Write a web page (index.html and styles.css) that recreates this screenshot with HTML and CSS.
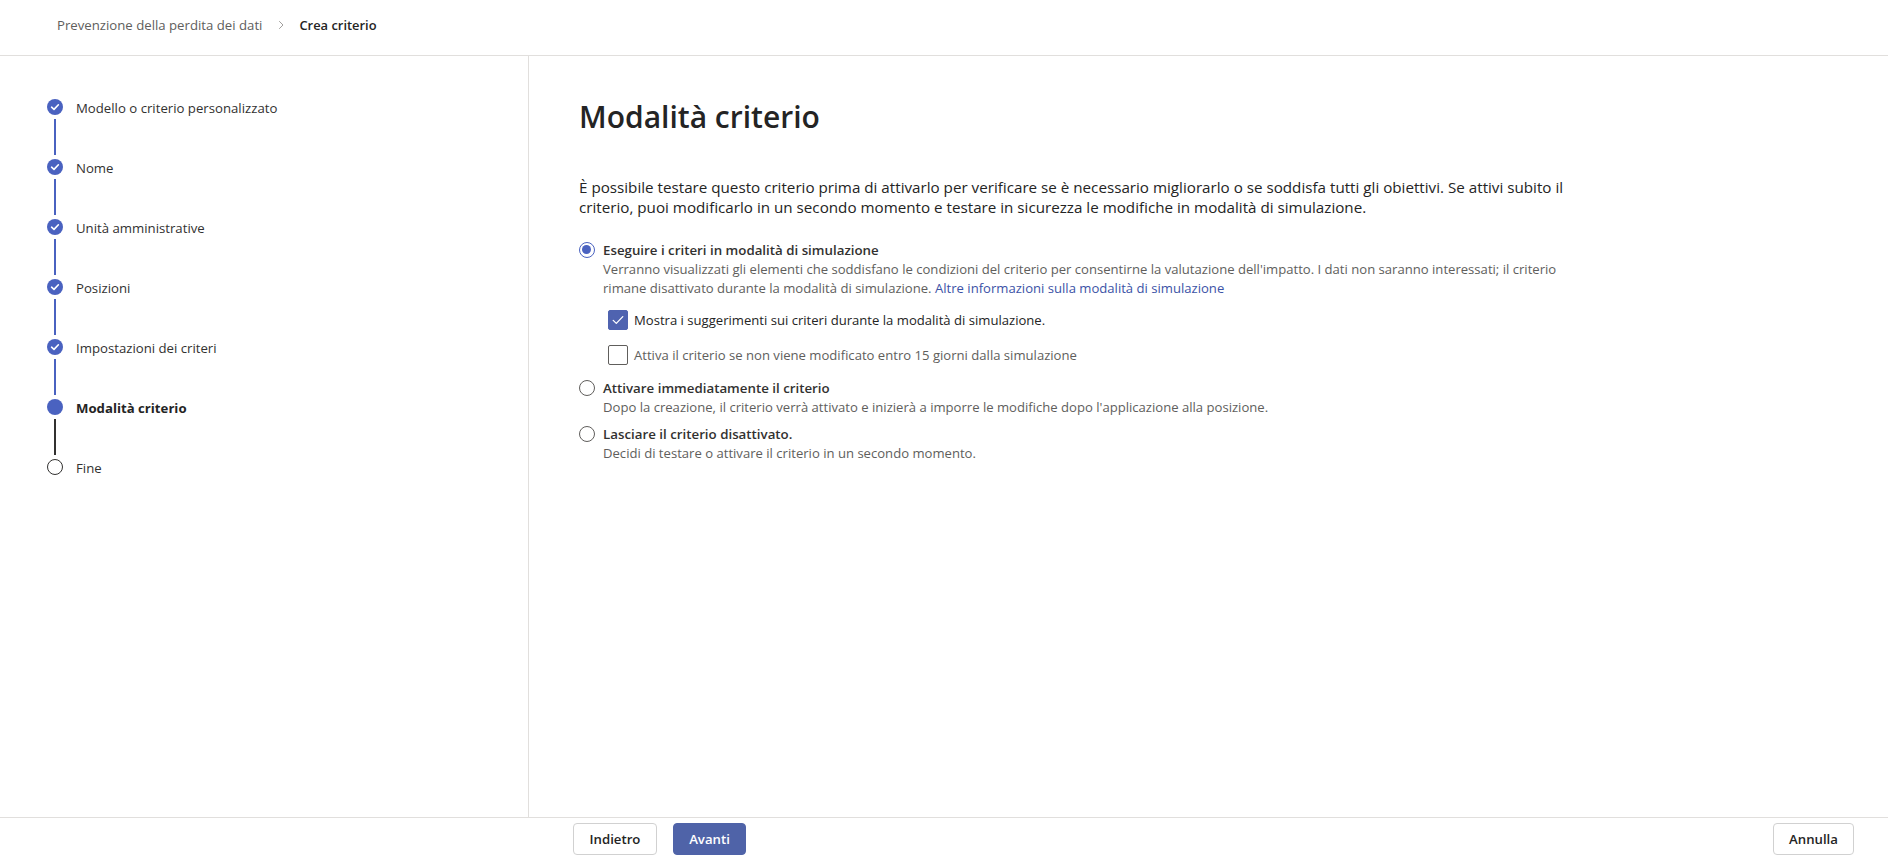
FILE: index.html
```html
<!DOCTYPE html>
<html lang="it">
<head>
<meta charset="utf-8">
<title>Crea criterio</title>
<link rel="stylesheet" href="styles.css">
</head>
<body>
<div class="app">
  <header class="topbar">
    <nav class="crumbs">
      <span class="crumb">Prevenzione della perdita dei dati</span>
      <svg class="crumb-sep" width="12" height="12" viewBox="0 0 12 12"><path d="M4.2 2.2 L8 6 L4.2 9.8" fill="none" stroke="#a19f9d" stroke-width="1"/></svg>
      <span class="crumb current">Crea criterio</span>
    </nav>
  </header>

  <div class="main">
    <aside class="wizard-nav">
      <ol class="steps">
        <li class="step done">
          <div class="marker"><span class="dot"><svg width="16" height="16" viewBox="0 0 16 16"><path d="M4.6 8.2 L7 10.4 L11.4 5.8" fill="none" stroke="#fff" stroke-width="1.6" stroke-linecap="round" stroke-linejoin="round"/></svg></span><span class="line"></span></div>
          <span class="step-label">Modello o criterio personalizzato</span>
        </li>
        <li class="step done">
          <div class="marker"><span class="dot"><svg width="16" height="16" viewBox="0 0 16 16"><path d="M4.6 8.2 L7 10.4 L11.4 5.8" fill="none" stroke="#fff" stroke-width="1.6" stroke-linecap="round" stroke-linejoin="round"/></svg></span><span class="line"></span></div>
          <span class="step-label">Nome</span>
        </li>
        <li class="step done">
          <div class="marker"><span class="dot"><svg width="16" height="16" viewBox="0 0 16 16"><path d="M4.6 8.2 L7 10.4 L11.4 5.8" fill="none" stroke="#fff" stroke-width="1.6" stroke-linecap="round" stroke-linejoin="round"/></svg></span><span class="line"></span></div>
          <span class="step-label">Unità amministrative</span>
        </li>
        <li class="step done">
          <div class="marker"><span class="dot"><svg width="16" height="16" viewBox="0 0 16 16"><path d="M4.6 8.2 L7 10.4 L11.4 5.8" fill="none" stroke="#fff" stroke-width="1.6" stroke-linecap="round" stroke-linejoin="round"/></svg></span><span class="line"></span></div>
          <span class="step-label">Posizioni</span>
        </li>
        <li class="step done">
          <div class="marker"><span class="dot"><svg width="16" height="16" viewBox="0 0 16 16"><path d="M4.6 8.2 L7 10.4 L11.4 5.8" fill="none" stroke="#fff" stroke-width="1.6" stroke-linecap="round" stroke-linejoin="round"/></svg></span><span class="line"></span></div>
          <span class="step-label">Impostazioni dei criteri</span>
        </li>
        <li class="step current">
          <div class="marker"><span class="dot"></span><span class="line"></span></div>
          <span class="step-label">Modalità criterio</span>
        </li>
        <li class="step todo">
          <div class="marker"><span class="dot"></span></div>
          <span class="step-label">Fine</span>
        </li>
      </ol>
    </aside>

    <section class="content">
      <h1 class="title">Modalità criterio</h1>
      <p class="intro">È possibile testare questo criterio prima di attivarlo per verificare se è necessario migliorarlo o se soddisfa tutti gli obiettivi. Se attivi subito il criterio, puoi modificarlo in un secondo momento e testare in sicurezza le modifiche in modalità di simulazione.</p>

      <div class="options">
        <div class="option">
          <span class="radio checked"></span>
          <div class="option-body">
            <div class="option-label">Eseguire i criteri in modalità di simulazione</div>
            <p class="option-desc">Verranno visualizzati gli elementi che soddisfano le condizioni del criterio per consentirne la valutazione dell'impatto. I dati non saranno interessati; il criterio rimane disattivato durante la modalità di simulazione. <a class="link" href="#">Altre informazioni sulla modalità di simulazione</a></p>
            <div class="checks">
              <div class="check">
                <span class="box checked"><svg width="20" height="20" viewBox="0 0 20 20"><path d="M5.2 10.4 L8.3 13.4 L14.8 6.6" fill="none" stroke="#fff" stroke-width="1.3" stroke-linecap="round" stroke-linejoin="round"/></svg></span>
                <span class="check-label">Mostra i suggerimenti sui criteri durante la modalità di simulazione.</span>
              </div>
              <div class="check">
                <span class="box"></span>
                <span class="check-label muted">Attiva il criterio se non viene modificato entro 15 giorni dalla simulazione</span>
              </div>
            </div>
          </div>
        </div>

        <div class="option">
          <span class="radio"></span>
          <div class="option-body">
            <div class="option-label">Attivare immediatamente il criterio</div>
            <p class="option-desc">Dopo la creazione, il criterio verrà attivato e inizierà a imporre le modifiche dopo l'applicazione alla posizione.</p>
          </div>
        </div>

        <div class="option">
          <span class="radio"></span>
          <div class="option-body">
            <div class="option-label">Lasciare il criterio disattivato.</div>
            <p class="option-desc">Decidi di testare o attivare il criterio in un secondo momento.</p>
          </div>
        </div>
      </div>
    </section>
  </div>

  <footer class="footer">
    <div class="footer-left">
      <button class="btn back">Indietro</button>
      <button class="btn primary">Avanti</button>
    </div>
    <button class="btn cancel">Annulla</button>
  </footer>
</div>
</body>
</html>
```

FILE: styles.css
```css
* { box-sizing: border-box; }

html, body {
  margin: 0;
  padding: 0;
  height: 100%;
  background: #ffffff;
  font-family: "Open Sans", "Noto Sans", "Liberation Sans", sans-serif;
  color: #323130;
}

.app {
  height: 100vh;
  display: flex;
  flex-direction: column;
}

/* Top bar / breadcrumb */
.topbar {
  height: 56px;
  flex: 0 0 56px;
  border-bottom: 1px solid #e1dfdd;
  display: flex;
  align-items: flex-start;
  padding: 15px 0 0 57px;
}

.crumbs {
  display: flex;
  align-items: center;
  font-size: 13.2px;
  line-height: 20px;
}

.crumb { color: #605e5c; }

.crumb-sep { margin: 0 12px 0 13px; }

.crumb.current {
  color: #242424;
  font-weight: 600;
  font-size: 12.9px;
}

/* Main area */
.main {
  flex: 1;
  display: flex;
  min-height: 0;
}

.wizard-nav {
  width: 529px;
  flex: 0 0 529px;
  border-right: 1px solid #e1dfdd;
  padding: 42px 0 0 47px;
}

.steps {
  list-style: none;
  margin: 0;
  padding: 0;
}

.step {
  display: flex;
  gap: 13px;
  height: 60px;
}

.step.todo { height: 24px; }

.marker {
  width: 16px;
  display: flex;
  flex-direction: column;
  align-items: center;
}

.dot {
  width: 16px;
  height: 16px;
  margin-top: 1px;
  border-radius: 50%;
  background: #4a62c0;
  flex: 0 0 16px;
  display: flex;
}

.step.todo .dot {
  background: #fff;
  border: 1.6px solid #323130;
}

.line {
  flex: 1;
  width: 2px;
  margin: 4px 0 3px;
  background: #4a62c0;
}

.step.current .line { background: #323130; }

.step-label {
  font-size: 13.2px;
  line-height: 20px;
  color: #323130;
}

.step.current .step-label {
  font-weight: 700;
  color: #242424;
}

/* Content */
.content {
  flex: 1;
  padding: 43px 0 0 50px;
}

.title {
  margin: 0;
  font-size: 30px;
  line-height: 36px;
  font-weight: 600;
  color: #242424;
}

.intro {
  margin: 42px 0 0;
  max-width: 1000px;
  font-size: 15.2px;
  line-height: 20px;
  color: #242424;
}

.options {
  margin-top: 23px;
  max-width: 1000px;
  display: flex;
  flex-direction: column;
  gap: 7px;
}

.option {
  display: flex;
  gap: 8px;
}

.radio {
  width: 16px;
  height: 16px;
  flex: 0 0 16px;
  margin-top: 2px;
  border-radius: 50%;
  border: 1px solid #605e5c;
  background: #fff;
  position: relative;
}

.radio.checked {
  border: 1.5px solid #4a62c0;
}

.radio.checked::after {
  content: "";
  position: absolute;
  left: 2px;
  top: 2px;
  width: 9px;
  height: 9px;
  border-radius: 50%;
  background: #4a62c0;
}

.option-label {
  font-size: 13.3px;
  line-height: 20px;
  font-weight: 600;
  color: #323130;
}

.option-desc {
  margin: 0;
  font-size: 13.1px;
  line-height: 19px;
  color: #605e5c;
}

.link {
  color: #3b52a6;
  text-decoration: none;
}

.checks {
  margin: 12px 0 6px 5px;
  display: flex;
  flex-direction: column;
  gap: 15px;
}

.check {
  display: flex;
  align-items: center;
  gap: 6px;
}

.box {
  width: 20px;
  height: 20px;
  flex: 0 0 20px;
  border: 1px solid #605e5c;
  border-radius: 2px;
  background: #fff;
  display: flex;
}

.box.checked {
  background: #4f63b0;
  border-color: #4f63b0;
}

.box.checked svg { margin: -1px; }

.check-label {
  font-size: 13.1px;
  line-height: 20px;
  color: #242424;
}

.check-label.muted { color: #605e5c; }

/* Footer */
.footer {
  flex: 0 0 43px;
  border-top: 1px solid #e1dfdd;
  display: flex;
  justify-content: space-between;
  align-items: flex-start;
  padding: 5px 34px 0 573px;
}

.footer-left {
  display: flex;
  gap: 16px;
}

.btn {
  height: 32px;
  padding: 0 12px;
  border-radius: 4px;
  border: 1px solid #d1d1d1;
  background: #fff;
  font-family: inherit;
  font-size: 13.2px;
  font-weight: 600;
  color: #242424;
}

.btn.back { width: 84px; }
.btn.primary { width: 73px; }
.btn.cancel { width: 81px; }

.btn.primary {
  background: #4f63a8;
  border-color: #4f63a8;
  color: #fff;
}
```
